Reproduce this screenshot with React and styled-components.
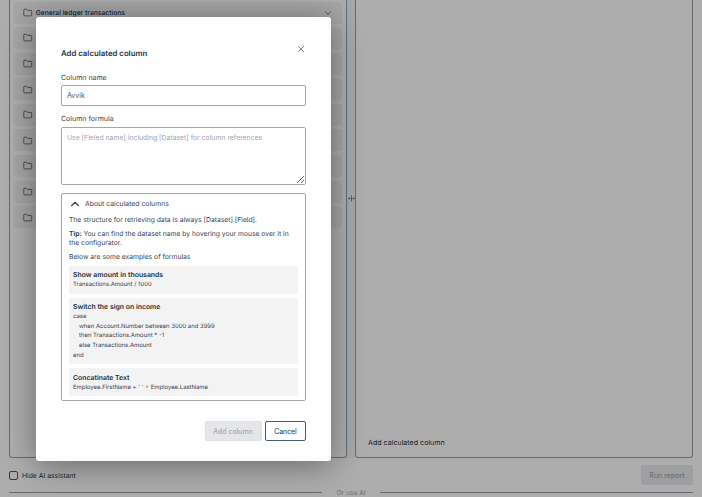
import React from "react";
import styled, { createGlobalStyle } from "styled-components";
import { ChevronDown, ChevronUp, Folder, X } from "lucide-react";

const GlobalStyle = createGlobalStyle`
  * {
    box-sizing: border-box;
  }
  body {
    margin: 0;
    background: #fff;
    font-family: Inter, "Liberation Sans", sans-serif;
    color: #1d3245;
    text-rendering: geometricPrecision;
  }
`;

const Page = styled.div`
  position: relative;
  width: 702px;
  height: 497px;
  overflow: hidden;
  padding: 0 9px;
  display: flex;
  flex-direction: column;
`;

const Columns = styled.div`
  display: flex;
  height: 458px;
`;

const Panel = styled.section`
  flex: none;
  width: 338px;
  display: flex;
  flex-direction: column;
  border: 1px solid #98a0a8;
  border-top: none;
  border-radius: 0 0 3px 3px;
`;

const LeftList = styled.div`
  display: flex;
  flex-direction: column;
  gap: 3.6px;
  padding: 1.5px 4px 0 4px;
`;

const Row = styled.div`
  height: 22px;
  display: flex;
  align-items: center;
  gap: 3.2px;
  padding: 0 9px;
  background: #f4f4f4;
  border-radius: 3px;
  font-size: 6.75px;
  font-weight: 500;
  color: #1d3245;

  span {
    flex: 1;
  }
`;

const Splitter = styled.div`
  width: 8px;
  flex: none;
  background: #f3f8fc;
`;

const RightPanel = styled(Panel)`
  justify-content: flex-end;
  padding: 0 12px 10px 12px;
`;

const LinkText = styled.a`
  font-size: 7.1px;
  font-weight: 400;
  color: #1d3245;
`;

const Footer = styled.div`
  height: 30px;
  display: flex;
  align-items: center;
  justify-content: space-between;
  padding: 6px 0 2px 0;
`;

const CheckRow = styled.label`
  display: flex;
  align-items: center;
  gap: 4px;
  font-size: 6.8px;
  color: #1d3245;
`;

const CheckBox = styled.span`
  width: 9px;
  height: 9px;
  border: 1px solid #3f5f78;
  border-radius: 2px;
`;

const RunButton = styled.button`
  width: 52px;
  height: 20px;
  border: none;
  border-radius: 2px;
  background: #e8eaed;
  color: #a4a8b0;
  font: 500 7px Inter, sans-serif;
  padding: 0;
`;

const Divider = styled.div`
  display: flex;
  align-items: center;
  gap: 14px;
  font-size: 6.7px;
  color: #a4a8b0;
  height: 9px;

  &::before,
  &::after {
    content: "";
    flex: 1;
    height: 1px;
    background: #98a0a8;
  }
`;

const Overlay = styled.div`
  position: absolute;
  inset: 0;
  background: rgba(0, 0, 0, 0.322);
`;

const ResizeIcon = styled.svg`
  position: absolute;
  left: 348px;
  top: 195px;
  width: 7px;
  height: 7px;
`;

const Modal = styled.div`
  position: absolute;
  left: 36px;
  top: 17px;
  width: 295px;
  height: 444px;
  background: #fff;
  border-radius: 3px;
  box-shadow: 0 4px 32px rgba(0, 0, 0, 0.4);
  padding: 30px 25px 0 25px;
  display: flex;
  flex-direction: column;
`;

const Title = styled.h2`
  margin: 0;
  font-size: 7.8px;
  line-height: 12px;
  font-weight: 600;
  color: #1d3245;
`;

const CloseButton = styled.span`
  position: absolute;
  top: 26.5px;
  right: 25px;
  display: flex;
  color: #39424e;
`;

const Label = styled.label`
  display: block;
  font-size: 7px;
  line-height: 10px;
  color: #39424e;
  margin: ${({ $top }) => $top}px 0 ${({ $bottom }) => $bottom}px 0;
`;

const TextInput = styled.input`
  display: block;
  width: 100%;
  height: 21px;
  border: 1px solid #a0a4ad;
  border-radius: 2px;
  padding: 0 5px;
  font: 400 7px Inter, sans-serif;
  color: #4a5360;
  outline: none;
`;

const TextArea = styled.textarea`
  display: block;
  width: 100%;
  height: 58px;
  border: 1px solid #a0a4ad;
  border-radius: 2px;
  padding: 5px;
  font: 400 6.85px/10px Inter, sans-serif;
  outline: none;

  &::placeholder {
    color: #a0a4ab;
  }
`;

const Accordion = styled.div`
  margin-top: 8px;
  height: 208px;
  border: 1px solid #a0a4ad;
  border-radius: 2px;
  padding: 0 7px;
  display: flex;
  flex-direction: column;
`;

const AccordionHead = styled.div`
  height: 19px;
  display: flex;
  align-items: center;
  gap: 3px;
  margin-left: -1px;
  font-size: 6.85px;
  color: #39424e;
`;

const Para = styled.p`
  margin: ${({ $top }) => $top}px 0 0 0;
  font-size: 6.75px;
  line-height: 9.6px;
  color: #39424e;

  b {
    font-weight: 600;
    color: #1d3245;
  }
`;

const Example = styled.div`
  background: #f3f3f3;
  border-radius: 2px;
  padding: 4.5px 4px 3.5px 4px;
  margin-top: ${({ $top }) => $top}px;
`;

const ExampleTitle = styled.div`
  font-size: 6.9px;
  line-height: 10px;
  font-weight: 600;
  color: #1d3245;
`;

const Code = styled.div`
  font-size: 5.95px;
  line-height: 9.7px;
  color: #39424e;
  padding-left: ${({ $indent }) => ($indent ? 6 : 0)}px;
`;

const Actions = styled.div`
  margin-top: 20px;
  display: flex;
  justify-content: flex-end;
  gap: 3.5px;
`;

const AddButton = styled.button`
  width: 57px;
  height: 20px;
  border: 1px solid #dfe1e6;
  border-radius: 2px;
  background: #e4e6ea;
  color: #a4a8b0;
  font: 500 6.9px Inter, sans-serif;
  padding: 0;
`;

const CancelButton = styled(AddButton)`
  width: 41px;
  border-color: #3f5f78;
  background: #fff;
  color: #1d3245;
  font-weight: 400;
`;

const folders = ["General ledger transactions", "", "", "", "", "", "", "", ""];

export default function App() {
  return (
    <>
      <GlobalStyle />
      <Page>
        <Columns>
          <Panel>
            <LeftList>
              {folders.map((name, i) => (
                <Row key={i}>
                  <Folder size={9.5} strokeWidth={1.6} />
                  <span>{name}</span>
                  <ChevronDown size={10} strokeWidth={1.6} />
                </Row>
              ))}
            </LeftList>
          </Panel>
          <Splitter />
          <RightPanel>
            <LinkText>Add calculated column</LinkText>
          </RightPanel>
        </Columns>
        <Footer>
          <CheckRow>
            <CheckBox />
            Hide AI assistant
          </CheckRow>
          <RunButton>Run report</RunButton>
        </Footer>
        <Divider>Or use AI</Divider>
        <Overlay />
        <ResizeIcon viewBox="0 0 7 7" fill="none" stroke="#3f4852" strokeWidth="0.8">
          <path d="M3.5 0.5v6M1 3.5h1.6M4.4 3.5h1.6M1.5 2.5L0.5 3.5l1 1M5.5 2.5l1 1-1 1" />
        </ResizeIcon>
        <Modal>
          <Title>Add calculated column</Title>
          <CloseButton>
            <X size={10} strokeWidth={1.6} />
          </CloseButton>
          <Label $top={14} $bottom={2}>Column name</Label>
          <TextInput defaultValue="Avvik" />
          <Label $top={8} $bottom={3}>Column formula</Label>
          <TextArea placeholder="Use [Fieled name] including [Dataset] for column references" />
          <Accordion>
            <AccordionHead>
              <ChevronUp size={14} strokeWidth={2} />
              About calculated columns
            </AccordionHead>
            <Para $top={2}>The structure for retrieving data is always [Dataset].[Field].</Para>
            <Para $top={4}>
              <b>Tip:</b> You can find the dataset name by hovering your mouse over it in the
              configurator.
            </Para>
            <Para $top={4.5}>Below are some examples of formulas</Para>
            <Example $top={4}>
              <ExampleTitle>Show amount in thousands</ExampleTitle>
              <Code>Transactions.Amount / 1000</Code>
            </Example>
            <Example $top={4}>
              <ExampleTitle>Switch the sign on income</ExampleTitle>
              <Code>case</Code>
              <Code $indent>when Account.Number between 3000 and 3999</Code>
              <Code $indent>then Transactions.Amount * -1</Code>
              <Code $indent>else Transactions.Amount</Code>
              <Code>end</Code>
            </Example>
            <Example $top={4}>
              <ExampleTitle>Concatinate Text</ExampleTitle>
              <Code>Employee.FirstName + ' ' + Employee.LastName</Code>
            </Example>
          </Accordion>
          <Actions>
            <AddButton>Add column</AddButton>
            <CancelButton>Cancel</CancelButton>
          </Actions>
        </Modal>
      </Page>
    </>
  );
}
